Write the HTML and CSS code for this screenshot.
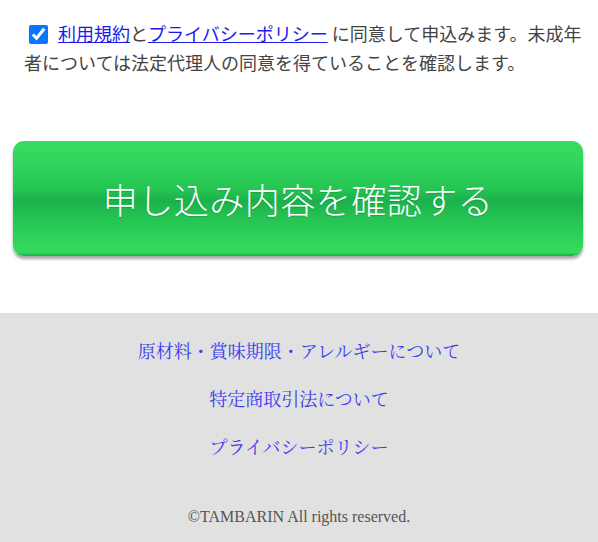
FILE: index.html
```html
<!DOCTYPE html>
<html lang="ja">
<head>
<meta charset="utf-8">
<link rel="stylesheet" href="styles.css">
</head>
<body>
<main class="form">
  <p class="agree">
    <input type="checkbox" class="check" checked>
    <a href="#">利用規約</a>と<a href="#">プライバシーポリシー</a> に同意して申込みます。未成年者については法定代理人の同意を得ていることを確認します。
  </p>
  <div class="submit-wrap">
    <button class="submit" type="button">申し込み内容を確認する</button>
  </div>
</main>
<footer class="footer">
  <nav class="footer-links">
    <a href="#">原材料・賞味期限・アレルギーについて</a>
    <a href="#">特定商取引法について</a>
    <a href="#">プライバシーポリシー</a>
  </nav>
  <p class="copy">©TAMBARIN All rights reserved.</p>
</footer>
</body>
</html>
```
FILE: styles.css
```css
html, body {
  margin: 0;
  padding: 0;
  background: #fff;
}
body {
  font-family: "Noto Sans CJK JP", "Noto Sans", sans-serif;
}
.form {
  padding-top: 19px;
}
.agree {
  margin: 0;
  padding: 0 10px 0 24px;
  font-size: 18px;
  line-height: 29px;
  color: #444;
}
.agree a {
  color: #1a1aee;
  text-decoration: underline;
}
.check {
  width: 19px;
  height: 19px;
  margin: 0 6px 0 5px;
  vertical-align: -3px;
  accent-color: #0b75ff;
}
.submit-wrap {
  padding: 64px 15px 0 13px;
}
.submit {
  display: block;
  width: 100%;
  height: 115px;
  border: none;
  border-radius: 11px;
  background: linear-gradient(180deg, #39dc62 0%, #2fd45b 22%, #25c453 42%, #1bb14c 52%, #24c252 66%, #30d35b 85%, #34d95e 97%, #1fa846 100%);
  box-shadow: 0 3px 3px rgba(0, 0, 0, 0.35);
  color: #fff;
  font-family: "Noto Sans CJK JP", sans-serif;
  font-size: 35px;
  font-weight: 300;
  letter-spacing: 0.5px;
  text-shadow: 0 1px 1px rgba(0, 0, 0, 0.15);
  padding: 0;
  cursor: pointer;
}
.footer {
  margin-top: 57px;
  background: #e1e1e1;
  padding: 13px 0 14px;
  text-align: center;
}
.footer-links {
  display: flex;
  flex-direction: column;
  align-items: center;
}
.footer-links a {
  display: block;
  font-family: "Noto Serif CJK JP", "Liberation Serif", "Noto Sans CJK JP", serif;
  font-size: 18px;
  line-height: 48px;
  color: #3b3bf0;
  text-decoration: none;
}
.copy {
  margin: 35px 0 0;
  font-family: "Liberation Serif", serif;
  font-size: 16px;
  line-height: 24px;
  color: #555;
}
```
